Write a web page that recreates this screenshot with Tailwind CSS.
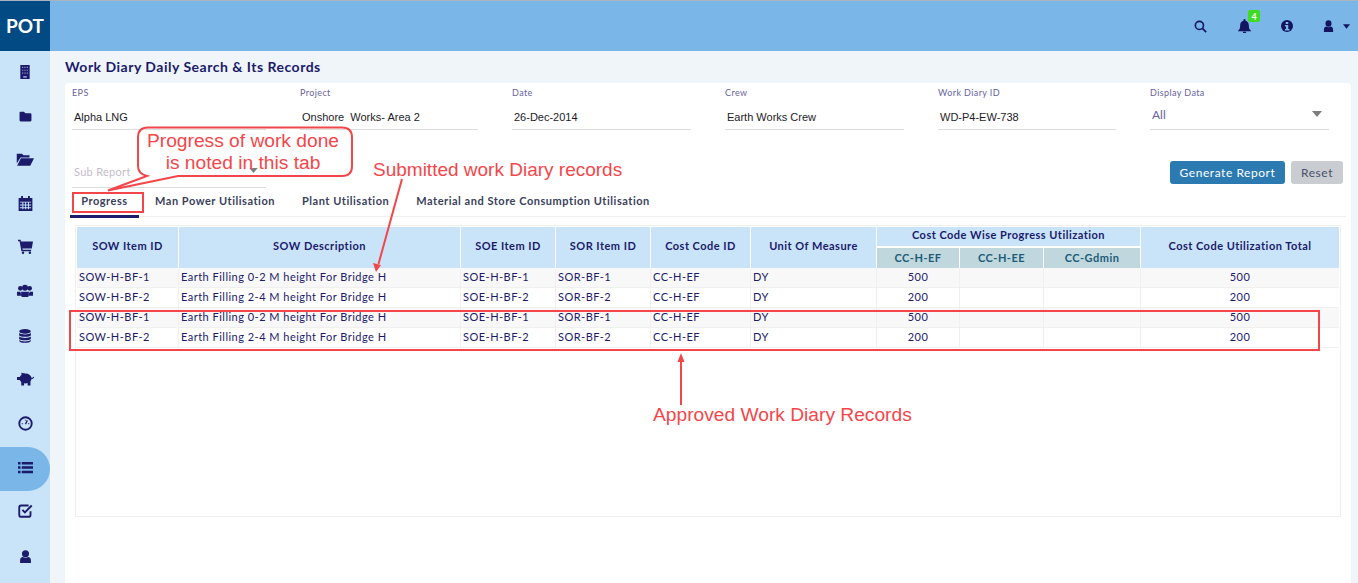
<!DOCTYPE html>
<html lang="en">

<head>
  <meta charset="UTF-8" />
  <title>Work Diary Daily Search</title>
  <script src="https://cdn.jsdelivr.net/npm/@tailwindcss/browser@4"></script>
</head>

<body class="relative h-[583px] w-[1358px] overflow-hidden bg-[#f0f5f9] font-['Lato',sans-serif] text-[#1b1a6b]">
  <!-- top bar -->
  <header class="flex h-[51px] border-t border-[#a9b4bf] bg-[#7ab6e8]">
    <div class="flex w-[50px] items-center justify-center bg-[#014a83] text-[19px] font-bold text-white">POT</div>
    <div class="flex flex-1 items-center justify-end text-[#14145f]">
      <svg class="mr-[31px] h-[13px] w-[13px]" viewBox="0 0 24 24" fill="none" stroke="currentColor" stroke-width="3"><circle cx="10" cy="10" r="7.500" /><path d="M15.500 15.500l7 7" /></svg>
      <div class="relative mr-[30px]">
        <svg class="block h-[14px] w-[13px]" viewBox="0 0 24 24" preserveAspectRatio="none" fill="currentColor"><path d="M12 0a2 2 0 0 1 2 2v1c4 1 6 4 6 8 0 5 1 7 4 9v1H0v-1c3-2 4-4 4-9 0-4 2-7 6-8V2a2 2 0 0 1 2-2zM9 22h6a3 3 0 0 1-6 0z" /></svg>
        <span class="absolute left-[10px] top-[-9px] flex h-3 w-3 items-center justify-center rounded-[2px] bg-[#3ddc1f] text-[9px] font-bold leading-none text-white">4</span>
      </div>
      <svg class="mr-[30px] h-3 w-3" viewBox="0 0 24 24"><circle cx="12" cy="12" r="12" fill="currentColor" /><rect x="9.500" y="4" width="5" height="4" fill="#7ab6e8" /><path d="M8 10h6.500v8H17v3H8v-3h2v-5H8z" fill="#7ab6e8" /></svg>
      <svg class="mr-[9px] h-[12px] w-[11px]" viewBox="0 0 24 24" preserveAspectRatio="none" fill="currentColor"><circle cx="12" cy="7" r="6.500" /><path d="M2 24v-5c0-4 3-6 5-6 1.500 1 3 1.500 5 1.500s3.500-.5 5-1.500c2 0 5 2 5 6v5z" /></svg>
      <svg class="mr-[8px] h-[5px] w-[7px]" viewBox="0 0 8 5" fill="currentColor"><path d="M0 0h8L4 5z" /></svg>
    </div>
  </header>

  <div class="flex h-[532px]">
    <!-- side nav -->
    <nav class="flex w-[50px] shrink-0 flex-col items-center bg-[#c9e4f9] text-[#1b1a6b]">
      <div class="flex h-[44px] w-full items-center justify-center pb-[2px]"><svg class="h-[14px] w-[14px]" viewBox="0 0 24 24" fill="currentColor"><path d="M4 0h16v24H4z" /><path d="M7 3h2v2H7zm4 0h2v2h-2zm4 0h2v2h-2zM7 8h2v2H7zm4 0h2v2h-2zm4 0h2v2h-2zM7 13h2v2H7zm4 0h2v2h-2zm4 0h2v2h-2zM9 19h6v3H9z" fill="#8f9bd0" /></svg></div>
      <div class="flex h-[44px] w-full items-center justify-center pb-[2px]"><svg class="h-[13px] w-[13px]" viewBox="0 0 24 24" fill="currentColor"><path d="M1 5a2 2 0 0 1 2-2h6l3 3h9a2 2 0 0 1 2 2v11a2 2 0 0 1-2 2H3a2 2 0 0 1-2-2z" /></svg></div>
      <div class="flex h-[44px] w-full items-center justify-center pb-[4px]"><svg class="h-[18px] w-[18px]" viewBox="0 0 24 24" fill="currentColor"><path d="M1 5h7l2 2h8v3H6L1 18z" /><path d="M6.500 11H24l-5 10H1.500z" /></svg></div>
      <div class="flex h-[44px] w-full items-center justify-center pb-[4px]"><svg class="h-[15px] w-[15px]" viewBox="0 0 24 24" fill="currentColor"><path d="M1 3h4V0h3v3h8V0h3v3h4v21H1z" /><path d="M3 9h18v1.500H3zm0 4.500h18V15H3zM3 18h18v1.500H3zM7 9h1.500v12H7zm4.500 0H13v12h-1.500zM16 9h1.500v12H16z" fill="#c9e4f9" /></svg></div>
      <div class="flex h-[44px] w-full items-center justify-center pb-[5px]"><svg class="h-[15px] w-[15px]" viewBox="0 0 24 24" fill="currentColor"><path d="M0 1h4l1 3h19l-2 11H7l.5 2H21v2.500H5.500L2.500 3.500H0z" /><circle cx="8" cy="22" r="2" /><circle cx="19" cy="22" r="2" /></svg></div>
      <div class="flex h-[44px] w-full items-center justify-center pb-[4px]"><svg class="h-4 w-4" viewBox="0 0 24 24" fill="currentColor"><circle cx="5" cy="8" r="3.500" /><circle cx="19" cy="8" r="3.500" /><circle cx="12" cy="7" r="4.500" /><path d="M0 13h5l2 6H0zm24 0h-5l-2 6h7zM6 13h12l-1 8H7z" /></svg></div>
      <div class="flex h-[44px] w-full items-center justify-center pb-[2px]"><svg class="h-[14px] w-[14px]" viewBox="0 0 24 24" fill="currentColor"><ellipse cx="12" cy="4" rx="10" ry="4" /><path d="M2 7c2 3 18 3 20 0v4c-2 3-18 3-20 0zm0 6c2 3 18 3 20 0v4c-2 3-18 3-20 0zm0 6c2 3 18 3 20 0v1c-1 5-19 5-20 0z" /></svg></div>
      <div class="flex h-[44px] w-full items-center justify-center pb-[6px]"><svg class="h-[17px] w-[17px]" viewBox="0 0 24 24" fill="currentColor"><ellipse cx="12" cy="12" rx="8.500" ry="7" /><path d="M0 10h5v4H0zM6 16h4v6H6zm9 0h4v6h-4zM6 4l5 1v3H7zM20 11c2 0 3-1 4-2v2c-1 1-2 2-4 2z" /></svg></div>
      <div class="flex h-[44px] w-full items-center justify-center pb-[4px]"><svg class="h-[15px] w-[15px]" viewBox="0 0 24 24" fill="none" stroke="currentColor" stroke-width="3"><circle cx="12" cy="12" r="10" /><path d="M12 13l3-6M6 12h1.500M16.500 12H18M12 6v1" stroke-width="2" /></svg></div>
      <div class="flex h-[44px] w-full items-center justify-center rounded-r-[22px] bg-[#7ab6e8] pb-[4px]"><svg class="h-[15px] w-[15px]" viewBox="0 0 24 24" fill="currentColor"><path d="M0 3h4v4H0zm6 0h18v4H6zM0 10h4v4H0zm6 0h18v4H6zM0 17h4v4H0zm6 0h18v4H6z" /></svg></div>
      <div class="flex h-[44px] w-full items-center justify-center pb-[6px]"><svg class="h-[15px] w-[15px]" viewBox="0 0 24 24" fill="none" stroke="currentColor" stroke-width="3"><path d="M20 13v6a3 3 0 0 1-3 3H5a3 3 0 0 1-3-3V7a3 3 0 0 1 3-3h12" /><path d="M7 11l4 4 11-11" /></svg></div>
      <div class="flex h-[44px] w-full items-center justify-center pb-[2px]"><svg class="h-[13px] w-[13px]" viewBox="0 0 24 24" fill="currentColor"><circle cx="12" cy="7" r="6.500" /><path d="M2 24v-5c0-4 3-6 5-6 1.500 1 3 1.500 5 1.500s3.500-.5 5-1.500c2 0 5 2 5 6v5z" /></svg></div>
    </nav>

    <main class="flex-1 pl-[15px] pr-[7px]">
      <h1 class="h-[32px] pt-[7px] text-[14px] font-bold leading-[18px] tracking-[0.5px]">Work Diary Daily Search &amp; Its Records</h1>

      <section class="h-[500px] rounded-t-[4px] bg-white pl-[7px] pr-[22px] pt-[4px]">
        <!-- filter fields -->
        <div class="flex gap-[34px]">
          <div class="w-[194px] border-b border-[#dddddd]">
            <p class="text-[9px] leading-[11px] tracking-[0.4px] text-[#67639f]">EPS</p>
            <p class="h-[31px] pl-[2px] pt-[12px] font-['Liberation_Sans',sans-serif] text-[11px] leading-[14px] text-[#1c1c28]">Alpha LNG</p>
          </div>
          <div class="w-[178px] border-b border-[#dddddd]">
            <p class="text-[9px] leading-[11px] tracking-[0.4px] text-[#67639f]">Project</p>
            <p class="h-[31px] pl-[2px] pt-[12px] whitespace-pre font-['Liberation_Sans',sans-serif] text-[11px] leading-[14px] text-[#1c1c28]">Onshore  Works- Area 2</p>
          </div>
          <div class="w-[179px] border-b border-[#dddddd]">
            <p class="text-[9px] leading-[11px] tracking-[0.4px] text-[#67639f]">Date</p>
            <p class="h-[31px] pl-[2px] pt-[12px] font-['Liberation_Sans',sans-serif] text-[11px] leading-[14px] text-[#1c1c28]">26-Dec-2014</p>
          </div>
          <div class="w-[179px] border-b border-[#dddddd]">
            <p class="text-[9px] leading-[11px] tracking-[0.4px] text-[#67639f]">Crew</p>
            <p class="h-[31px] pl-[2px] pt-[12px] font-['Liberation_Sans',sans-serif] text-[11px] leading-[14px] text-[#1c1c28]">Earth Works Crew</p>
          </div>
          <div class="w-[178px] border-b border-[#dddddd]">
            <p class="text-[9px] leading-[11px] tracking-[0.4px] text-[#67639f]">Work Diary ID</p>
            <p class="h-[31px] pl-[2px] pt-[12px] font-['Liberation_Sans',sans-serif] text-[11px] leading-[14px] text-[#1c1c28]">WD-P4-EW-738</p>
          </div>
          <div class="w-[179px] border-b border-[#dddddd]">
            <p class="text-[9px] leading-[11px] tracking-[0.4px] text-[#67639f]">Display Data</p>
            <div class="flex h-[31px] items-start justify-between pl-[2px] pr-[7px] pt-[10px]">
              <span class="text-[12px] leading-[14px] text-[#67639f]">All</span>
              <svg class="mt-[3px] h-[6px] w-[10px]" viewBox="0 0 10 6" fill="#7d7d7d"><path d="M0 0h10L5 6z" /></svg>
            </div>
          </div>
        </div>

        <!-- sub report and buttons -->
        <div class="flex items-start justify-between pt-[24px]">
          <div class="flex h-[34px] w-[194px] items-start justify-between border-b border-[#dddddd] pl-[2px] pr-[8px] pt-[11px]">
            <span class="text-[11px] leading-[14px] tracking-[0.3px] text-[#c4bcc8]">Sub Report</span>
            <svg class="mt-[3px] h-[5px] w-[9px]" viewBox="0 0 10 6" fill="#7d7d7d"><path d="M0 0h10L5 6z" /></svg>
          </div>
          <div class="mr-[-14px] mt-[7px] flex gap-[6px]">
            <button class="h-[23px] w-[115px] rounded-[3px] bg-[#2c7ab2] text-[12px] tracking-[0.55px] text-white">Generate Report</button>
            <button class="h-[23px] w-[52px] rounded-[3px] bg-[#c9cdd2] text-[12px] tracking-[0.55px] text-[#4a4f6b]">Reset</button>
          </div>
        </div>

        <!-- tabs -->
        <div class="-ml-[2px] mr-[-17px] flex h-[29px] items-start border-b border-[#f0f0f0] text-[11px] font-bold tracking-[0.53px] text-[#3a3f5c]">
          <div class="h-[30px] w-[69px] shrink-0 border-b-[3px] border-[#1b1a6b] pt-[6px] text-center leading-[14px]">Progress</div>
          <div class="pl-[16px] pt-[6px] leading-[14px]">Man Power Utilisation</div>
          <div class="pl-[27px] pt-[6px] leading-[14px]">Plant Utilisation</div>
          <div class="pl-[27px] pt-[6px] leading-[14px]">Material and Store Consumption Utilisation</div>
        </div>

        <!-- records table -->
        <div class="ml-[3px] mr-[-12px] mt-[8px] h-[292px] border border-[#f0f0f0] p-[1px]">
          <table class="w-[1262px] table-fixed border-separate border-spacing-0 text-center text-[11px] tracking-[0.48px]">
            <colgroup>
              <col class="w-[102px]" /><col class="w-[282px]" /><col class="w-[95px]" /><col class="w-[95px]" /><col class="w-[100px]" /><col class="w-[126px]" /><col class="w-[83px]" /><col class="w-[84px]" /><col class="w-[97px]" /><col class="w-[198px]" />
            </colgroup>
            <thead class="font-bold text-[#1b1a6b]">
              <tr class="h-[21px]">
                <th rowspan="2" class="border-r border-white bg-[#c9e4f9] pb-[3px]">SOW Item ID</th>
                <th rowspan="2" class="border-r border-white bg-[#c9e4f9] pb-[3px]">SOW Description</th>
                <th rowspan="2" class="border-r border-white bg-[#c9e4f9] pb-[3px]">SOE Item ID</th>
                <th rowspan="2" class="border-r border-white bg-[#c9e4f9] pb-[3px]">SOR Item ID</th>
                <th rowspan="2" class="border-r border-white bg-[#c9e4f9] pb-[3px]">Cost Code ID</th>
                <th rowspan="2" class="border-r border-white bg-[#c9e4f9] pb-[3px]">Unit Of Measure</th>
                <th colspan="3" class="border-r border-b-2 border-white bg-[#c9e4f9] pb-[2px]">Cost Code Wise Progress Utilization</th>
                <th rowspan="2" class="bg-[#c9e4f9] pb-[3px]">Cost Code Utilization Total</th>
              </tr>
              <tr class="h-[20px] text-[#1d5c78]">
                <th class="border-r border-white bg-[#c0d7dd]">CC-H-EF</th>
                <th class="border-r border-white bg-[#c0d7dd]">CC-H-EE</th>
                <th class="border-r border-white bg-[#c0d7dd]">CC-Gdmin</th>
              </tr>
            </thead>
            <tbody class="text-[#1b1a6b]">
              <tr class="h-[20px] bg-[#f8f8f8]">
                <td class="border-b border-r border-[#f0f0f0] pl-[2px] text-left">SOW-H-BF-1</td>
                <td class="border-b border-r border-[#f0f0f0] pl-[2px] text-left">Earth Filling 0-2 M height For Bridge H</td>
                <td class="border-b border-r border-[#f0f0f0] pl-[2px] text-left">SOE-H-BF-1</td>
                <td class="border-b border-r border-[#f0f0f0] pl-[2px] text-left">SOR-BF-1</td>
                <td class="border-b border-r border-[#f0f0f0] pl-[2px] text-left">CC-H-EF</td>
                <td class="border-b border-r border-[#f0f0f0] pl-[2px] text-left">DY</td>
                <td class="border-b border-r border-[#f0f0f0]">500</td>
                <td class="border-b border-r border-[#f0f0f0]"></td>
                <td class="border-b border-r border-[#f0f0f0]"></td>
                <td class="border-b border-[#f0f0f0]">500</td>
              </tr>
              <tr class="h-[20px] bg-white">
                <td class="border-b border-r border-[#f0f0f0] pl-[2px] text-left">SOW-H-BF-2</td>
                <td class="border-b border-r border-[#f0f0f0] pl-[2px] text-left">Earth Filling 2-4 M height For Bridge H</td>
                <td class="border-b border-r border-[#f0f0f0] pl-[2px] text-left">SOE-H-BF-2</td>
                <td class="border-b border-r border-[#f0f0f0] pl-[2px] text-left">SOR-BF-2</td>
                <td class="border-b border-r border-[#f0f0f0] pl-[2px] text-left">CC-H-EF</td>
                <td class="border-b border-r border-[#f0f0f0] pl-[2px] text-left">DY</td>
                <td class="border-b border-r border-[#f0f0f0]">200</td>
                <td class="border-b border-r border-[#f0f0f0]"></td>
                <td class="border-b border-r border-[#f0f0f0]"></td>
                <td class="border-b border-[#f0f0f0]">200</td>
              </tr>
              <tr class="h-[20px] bg-[#f8f8f8]">
                <td class="border-b border-r border-[#f0f0f0] pl-[2px] text-left">SOW-H-BF-1</td>
                <td class="border-b border-r border-[#f0f0f0] pl-[2px] text-left">Earth Filling 0-2 M height For Bridge H</td>
                <td class="border-b border-r border-[#f0f0f0] pl-[2px] text-left">SOE-H-BF-1</td>
                <td class="border-b border-r border-[#f0f0f0] pl-[2px] text-left">SOR-BF-1</td>
                <td class="border-b border-r border-[#f0f0f0] pl-[2px] text-left">CC-H-EF</td>
                <td class="border-b border-r border-[#f0f0f0] pl-[2px] text-left">DY</td>
                <td class="border-b border-r border-[#f0f0f0]">500</td>
                <td class="border-b border-r border-[#f0f0f0]"></td>
                <td class="border-b border-r border-[#f0f0f0]"></td>
                <td class="border-b border-[#f0f0f0]">500</td>
              </tr>
              <tr class="h-[20px] bg-white">
                <td class="border-b border-r border-[#f0f0f0] pl-[2px] text-left">SOW-H-BF-2</td>
                <td class="border-b border-r border-[#f0f0f0] pl-[2px] text-left">Earth Filling 2-4 M height For Bridge H</td>
                <td class="border-b border-r border-[#f0f0f0] pl-[2px] text-left">SOE-H-BF-2</td>
                <td class="border-b border-r border-[#f0f0f0] pl-[2px] text-left">SOR-BF-2</td>
                <td class="border-b border-r border-[#f0f0f0] pl-[2px] text-left">CC-H-EF</td>
                <td class="border-b border-r border-[#f0f0f0] pl-[2px] text-left">DY</td>
                <td class="border-b border-r border-[#f0f0f0]">200</td>
                <td class="border-b border-r border-[#f0f0f0]"></td>
                <td class="border-b border-r border-[#f0f0f0]"></td>
                <td class="border-b border-[#f0f0f0]">200</td>
              </tr>
            </tbody>
          </table>
        </div>
      </section>
    </main>
  </div>

  <!-- red annotations laid over the screenshot -->
  <svg class="pointer-events-none absolute left-0 top-0 h-[583px] w-[1358px]" viewBox="0 0 1358 583" fill="none" stroke="#f4464a" stroke-width="2">
    <path d="M148 127.500H342Q352 127.500 352 137.500V166Q352 176 342 176H178L108 190.500L147 176Q138 174 138 166V137.500Q138 127.500 148 127.500Z" />
    <rect x="73" y="193" width="70" height="19" />
    <rect x="70" y="311" width="1249" height="39" />
    <path d="M402 179L378.500 264" />
    <path d="M376 272l-3-9 8 2z" fill="#f4464a" stroke="none" />
    <path d="M681 405V360" />
    <path d="M681 353l-3.500 9h7z" fill="#f4464a" stroke="none" />
  </svg>
  <p class="absolute left-[137px] top-[130px] w-[212px] text-center font-['Liberation_Sans',sans-serif] text-[19.200px] leading-[22px] text-[#f4464a]">Progress of work done<br />is noted in this tab</p>
  <p class="absolute left-[373px] top-[159px] font-['Liberation_Sans',sans-serif] text-[19px] leading-[22px] text-[#f4464a]">Submitted work Diary records</p>
  <p class="absolute left-[653px] top-[404px] font-['Liberation_Sans',sans-serif] text-[19.200px] leading-[22px] text-[#f4464a]">Approved Work Diary Records</p>
</body>

</html>
